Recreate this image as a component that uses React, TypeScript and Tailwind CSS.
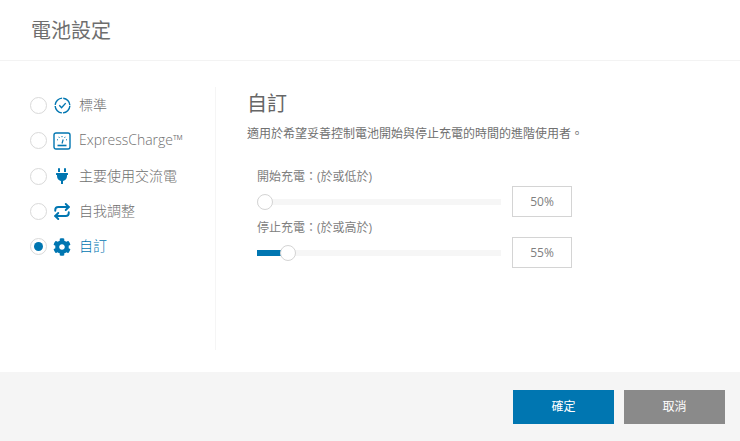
import { FaCog, FaPlug } from "react-icons/fa";
import { Repeat } from "lucide-react";

const BLUE = "#0076b1";

function ClockIcon() {
  return (
    <svg width="17" height="17" viewBox="0 0 18 18" fill="none" stroke={BLUE} strokeWidth="1.5">
      <circle cx="9" cy="9" r="7.8" strokeDasharray="11 1.25" strokeDashoffset="-0.6" />
      <path d="M5.6 8.8l2.4 2.5 4.4-4.8" strokeWidth="1.5" />
    </svg>
  );
}

function GaugeIcon() {
  return (
    <svg width="18" height="18" viewBox="0 0 18 18" fill="none" stroke={BLUE}>
      <rect x="1" y="1" width="16" height="16" rx="2" strokeWidth="1.4" />
      <path d="M4 7.5l1 .6M5.8 4.8l.6 1M9 4v1.2M12.2 4.8l-.6 1M14 7.5l-1 .6" strokeWidth="1" />
      <path d="M9 11.5l1.2-4" strokeWidth="1.2" />
      <path d="M4.5 13.5h9" strokeWidth="1.6" />
    </svg>
  );
}

const modes = [
  { label: "標準", icon: <ClockIcon /> },
  { label: "ExpressCharge™", icon: <GaugeIcon /> },
  { label: "主要使用交流電", icon: <FaPlug size={16} color={BLUE} /> },
  { label: "自我調整", icon: <Repeat size={19} color={BLUE} strokeWidth={2.6} /> },
  { label: "自訂", icon: <FaCog size={18} color={BLUE} />, selected: true },
];

function Radio({ selected }: { selected?: boolean }) {
  return (
    <div className="flex h-[17px] w-[17px] shrink-0 items-center justify-center rounded-full border border-[#d9d9d9] bg-white">
      {selected && <div className="h-[9px] w-[9px] rounded-full bg-[#0076b1]" />}
    </div>
  );
}

function Slider({ label, value, fill, thumb }: { label: string; value: string; fill: number; thumb: number }) {
  return (
    <div>
      <div className="pl-[10px] text-[12px] leading-[18px] text-[#808080]">{label}</div>
      <div className="flex items-center">
        <div className="relative ml-[10px] h-[6px] w-[244px] bg-[#f6f6f6]">
          <div className="h-full bg-[#0076b1]" style={{ width: fill }} />
          <div
            className="absolute top-[-5px] h-[16px] w-[16px] rounded-full border border-[#d4d4d4] bg-white"
            style={{ left: thumb }}
          />
        </div>
        <div className="ml-[11px] flex h-[31px] w-[60px] items-center justify-center border border-[#d4d4d4] text-[12px] text-[#808080]">
          {value}
        </div>
      </div>
    </div>
  );
}

export default function App() {
  return (
    <div
      className="flex h-[441px] w-[740px] flex-col bg-white"
      style={{ fontFamily: '"Open Sans", "Noto Sans CJK TC", sans-serif' }}
    >
      <div className="flex h-[61px] shrink-0 items-center border-b border-[#f3f3f3] pl-[31px] pt-[2px] text-[20px] text-[#6e6e6e]">
        電池設定
      </div>

      <div className="flex min-h-0 flex-1 pt-[26px]">
        <div className="flex h-[263px] w-[216px] shrink-0 flex-col border-r border-[#f5f5f5] pl-[30px] pt-[1px]">
          {modes.map((m) => (
            <div key={m.label} className="flex h-[35.3px] items-center">
              <Radio selected={m.selected} />
              <div className="ml-[6px] flex w-[18px] items-center justify-center">{m.icon}</div>
              <span
                className={`ml-[8px] -translate-y-px whitespace-nowrap text-[14px] font-light ${m.selected ? "text-[#0076b1]" : "text-[#707070]"}`}
              >
                {m.label}
              </span>
            </div>
          ))}
        </div>
        <div className="ml-[31px] flex flex-col">
          <div className="pt-[3px] text-[20px] leading-[28px] text-[#666]">自訂</div>
          <div className="mt-[7px] whitespace-nowrap text-[12px] leading-[18px] text-[#707070]">
            適用於希望妥善控制電池開始與停止充電的時間的進階使用者。
          </div>
          <div className="mt-[25px] flex flex-col gap-[2px]">
            <Slider label="開始充電：(於或低於)" value="50%" fill={0} thumb={0} />
            <Slider label="停止充電：(於或高於)" value="55%" fill={24} thumb={23} />
          </div>
        </div>
      </div>

      <div className="flex h-[69px] shrink-0 items-start justify-end gap-[10px] bg-[#f5f5f5] pr-[15px] pt-[18px]">
        <button className="h-[34px] w-[101px] bg-[#0076b1] text-[12px] text-white">確定</button>
        <button className="h-[34px] w-[101px] bg-[#8a8a8a] text-[12px] text-white">取消</button>
      </div>
    </div>
  );
}
